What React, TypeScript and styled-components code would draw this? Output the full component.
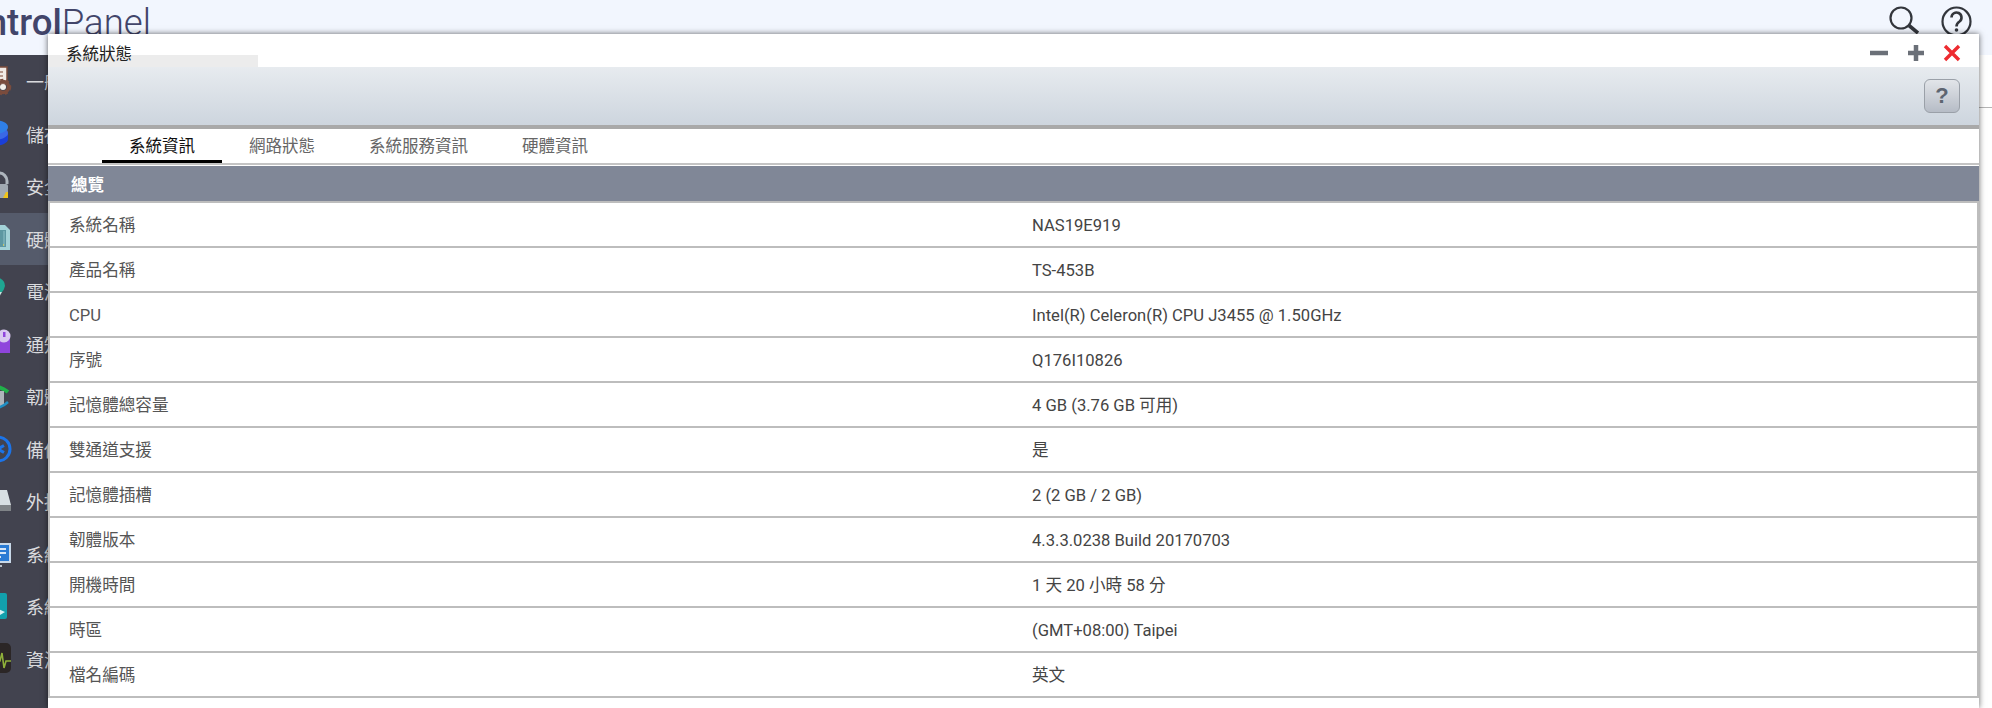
import React from 'react';
import styled, { createGlobalStyle } from 'styled-components';

const GlobalStyle = createGlobalStyle`
  html, body {
    margin: 0;
    padding: 0;
    background: #fff;
    overflow: hidden;
  }
  body {
    font-family: Roboto, "Noto Sans CJK TC", sans-serif;
  }
`;

const Page = styled.div`
  position: relative;
  width: 1992px;
  height: 708px;
  overflow: hidden;
  background: #fff;
`;

const TopBar = styled.header`
  height: 55px;
  background: #f2f6fe;
  display: flex;
  align-items: flex-start;
  justify-content: space-between;
  overflow: hidden;
`;

const Logo = styled.div`
  margin-left: -58px;
  font-size: 36.6px;
  line-height: 46px;
  color: #42456a;
  font-weight: 500;
  white-space: nowrap;
  span {
    font-weight: 300;
  }
`;

const TopIcons = styled.div`
  display: flex;
  gap: 22px;
  padding: 6px 20px 0 0;
`;

const Body = styled.div`
  display: flex;
`;

const Sidebar = styled.nav`
  width: 60px;
  height: 653px;
  background: #42434f;
  overflow: hidden;
`;

const SideItem = styled.div<{ $active?: boolean }>`
  height: 52.5px;
  display: flex;
  align-items: center;
  gap: 14px;
  background: ${(p) => (p.$active ? '#555b6b' : 'transparent')};
  color: #d9dadd;
  font-size: 18px;
  white-space: nowrap;
  svg {
    flex: none;
    margin-left: -22px;
  }
`;

const Desk = styled.div`
  flex: 1;
`;

const DeskRule = styled.div`
  margin-top: 52px;
  height: 1px;
  background: #b5b5b5;
`;

const Window = styled.section`
  position: absolute;
  left: 48px;
  top: 34px;
  width: 1931px;
  height: 674px;
  background: #fff;
  box-shadow: 0 0 6px rgba(0, 0, 0, 0.6);
  display: flex;
  flex-direction: column;
`;

const TitleBar = styled.div`
  position: relative;
  height: 33px;
  box-sizing: border-box;
  display: flex;
  align-items: center;
  justify-content: space-between;
  padding: 4px 18px 0 18px;
  font-size: 16.5px;
  color: #222;
`;

const TitlePatch = styled.div`
  position: absolute;
  left: 0;
  bottom: 0;
  width: 210px;
  height: 12px;
  background: #ececec;
`;

const TitleText = styled.span`
  position: relative;
`;

const WinControls = styled.div`
  display: flex;
  align-items: center;
  gap: 18px;
`;

const Toolbar = styled.div`
  height: 58px;
  background: linear-gradient(to bottom, #e7ebef, #cdd5de);
  border-bottom: 4px solid #a9a9a9;
  box-sizing: content-box;
  display: flex;
  align-items: center;
  justify-content: flex-end;
  padding-right: 19px;
`;

const HelpButton = styled.button`
  width: 36px;
  height: 34px;
  padding: 0;
  border: 1px solid #9aa0a8;
  border-radius: 6px;
  background: linear-gradient(to bottom, #e2e5e9, #b6bcc6);
  color: #5d6570;
  font: bold 22px "Liberation Sans", sans-serif;
`;

const Tabs = styled.div`
  height: 34px;
  display: flex;
  padding-left: 54px;
  border-bottom: 2px solid #c4c4c4;
  box-sizing: content-box;
`;

const Tab = styled.div<{ $active?: boolean }>`
  padding: 0 27px;
  height: 34px;
  box-sizing: border-box;
  display: flex;
  align-items: center;
  font-size: 16.5px;
  color: ${(p) => (p.$active ? '#111' : '#666')};
  border-bottom: 3px solid ${(p) => (p.$active ? '#000' : 'transparent')};
`;

const SectionHeader = styled.div`
  margin-top: 1px;
  height: 35px;
  background: #808797;
  color: #fff;
  font-size: 16.5px;
  font-weight: 700;
  display: flex;
  align-items: center;
  padding-left: 23px;
`;

const Table = styled.div`
  border-left: 2px solid #bdbdbd;
  border-right: 2px solid #bdbdbd;
  border-top: 2px solid #bdbdbd;
`;

const Row = styled.div`
  height: 45px;
  box-sizing: border-box;
  display: grid;
  grid-template-columns: 963px 1fr;
  align-items: center;
  padding: 3px 0 0 19px;
  border-bottom: 2px solid #bdbdbd;
  font-size: 16.6px;
  line-height: 20px;
  color: #444;
`;

const Label = styled.div`
  color: #555;
`;

const rows: [string, string][] = [
  ['系統名稱', 'NAS19E919'],
  ['產品名稱', 'TS-453B'],
  ['CPU', 'Intel(R) Celeron(R) CPU J3455 @ 1.50GHz'],
  ['序號', 'Q176I10826'],
  ['記憶體總容量', '4 GB (3.76 GB 可用)'],
  ['雙通道支援', '是'],
  ['記憶體插槽', '2 (2 GB / 2 GB)'],
  ['韌體版本', '4.3.3.0238 Build 20170703'],
  ['開機時間', '1 天 20 小時 58 分'],
  ['時區', '(GMT+08:00) Taipei'],
  ['檔名編碼', '英文'],
];

// icons are cut by the page's left edge, only their right part shows
const sideIcons: React.ReactNode[] = [
  <g key="general">
    <rect x="4" y="1" width="17" height="17" fill="#f1ebe6" stroke="#7a4c3d" strokeWidth="1.5" />
    <path d="M8 6H17M8 10H17" stroke="#b79a8e" strokeWidth="2" />
    <circle cx="17" cy="21" r="5.5" fill="none" stroke="#7a4c3d" strokeWidth="3.5" />
    <circle cx="17" cy="21" r="7" fill="none" stroke="#7a4c3d" strokeWidth="2.5" strokeDasharray="3 3" />
    <circle cx="17" cy="21" r="3" fill="#f4efe9" />
  </g>,
  <g key="storage">
    <ellipse cx="8" cy="20" rx="14" ry="7" fill="#1a3fd8" />
    <rect x="-6" y="14" width="28" height="6" fill="#1a3fd8" />
    <ellipse cx="8" cy="14" rx="14" ry="7" fill="#3a68e4" />
    <ellipse cx="8" cy="8" rx="14" ry="7" fill="#2f7fe6" />
  </g>,
  <g key="security">
    <path d="M5 13V10a8 8 0 0 1 16 0v3" fill="none" stroke="#aeb5bd" strokeWidth="3" />
    <rect x="-2" y="13" width="24" height="14" rx="2" fill="#a1a9b2" />
    <path d="M22 27H17L20 21L22 21Z" fill="#f0c419" />
  </g>,
  <g key="hardware">
    <path d="M-6 1H19L24 6V26H-6Z" fill="#a3d2d8" />
    <rect x="-2" y="6" width="22" height="17" fill="#5d97a2" />
    <path d="M3 7V22M8 7V22M13 7V22M18 7V22" stroke="#7fb4bc" strokeWidth="1.5" />
    <path d="M2 21H18" stroke="#e1cf58" strokeWidth="1.5" strokeDasharray="2 3" />
  </g>,
  <g key="power">
    <path d="M-8 1H10Q19 3 19 10Q18 14 16 16H-8Z" fill="#1fa692" />
    <path d="M-8 16H16Q13 22 7 26H-8Z" fill="#c6e4df" />
  </g>,
  <g key="notice">
    <rect x="-6" y="9" width="30" height="15" fill="#8f45dc" />
    <circle cx="18" cy="7" r="6.5" fill="#d8c8f0" />
    <rect x="17" y="3" width="2.5" height="5" fill="#8f45dc" />
  </g>,
  <g key="firmware">
    <path d="M-4 12 Q8 0 22 11" fill="none" stroke="#21b04a" strokeWidth="4" />
    <rect x="2" y="10" width="16" height="15" fill="#aeb4ba" />
    <path d="M-4 25 Q10 32 22 21" fill="none" stroke="#1f8fc4" strokeWidth="2.5" />
  </g>,
  <g key="backup">
    <circle cx="12" cy="15" r="12" fill="none" stroke="#1c74e8" strokeWidth="3" />
    <path d="M12 8V22M6 11.5L18 18.5M18 11.5L6 18.5" stroke="#1c74e8" strokeWidth="3" />
  </g>,
  <g key="external">
    <path d="M-6 4H21L25 19H-6Z" fill="#d8dfe3" />
    <rect x="-6" y="19" width="31" height="6" fill="#7f8387" />
  </g>,
  <g key="status">
    <rect x="-8" y="4" width="33" height="20" fill="#c8d8e8" />
    <rect x="-6" y="6" width="29" height="16" fill="#2a7bd4" />
    <path d="M6 10H20M6 14H20M6 18H15" stroke="#d6e6f7" strokeWidth="2" />
    <rect x="2" y="26" width="14" height="2" fill="#b8c0c8" />
  </g>,
  <g key="logs">
    <rect x="-8" y="2" width="29" height="26" rx="2" fill="#12a0ac" />
    <path d="M12 18L19 21L14 24Z" fill="#d9f2f5" />
  </g>,
  <g key="monitor">
    <rect x="-6" y="-1" width="31" height="30" rx="5" fill="#2b2626" />
    <path d="M-6 17H14L16 9L18 24L20 17H25" fill="none" stroke="#8fb03a" strokeWidth="1.6" />
  </g>,
];

const sideLabels = ['一般設定', '儲存與快照', '安全', '硬體', '電源', '通知', '韌體更新', '備份/還原', '外接裝置', '系統狀態', '系統記錄', '資源監控'];

const App: React.FC = () => (
  <>
    <GlobalStyle />
    <Page>
      <TopBar>
        <Logo>
          Control<span>Panel</span>
        </Logo>
        <TopIcons>
          <svg width="30" height="28" viewBox="0 0 30 28" fill="none" stroke="#33363c">
            <circle cx="12" cy="12" r="10.5" strokeWidth="2.2" />
            <path d="M20 19.5L29 27" strokeWidth="3.6" />
          </svg>
          <svg width="31" height="31" viewBox="0 0 31 31" fill="none" stroke="#33363c">
            <circle cx="15.5" cy="15.5" r="14" strokeWidth="2.2" />
            <path d="M10.5 11.5a5 5 0 1 1 8 4c-2 1.4-3 2.4-3 5" strokeWidth="2.6" />
            <circle cx="15.5" cy="24" r="1.8" fill="#33363c" stroke="none" />
          </svg>
        </TopIcons>
      </TopBar>
      <Body>
        <Sidebar>
          {sideLabels.map((label, i) => (
            <SideItem key={label} $active={i === 3}>
              <svg width="34" height="34" viewBox="-8 -2 34 34">
                {sideIcons[i]}
              </svg>
              {label}
            </SideItem>
          ))}
        </Sidebar>
        <Desk>
          <DeskRule />
        </Desk>
      </Body>
      <Window>
        <TitleBar>
          <TitlePatch />
          <TitleText>系統狀態</TitleText>
          <WinControls>
            <svg width="20" height="16" viewBox="0 0 20 16">
              <path d="M1 8H19" stroke="#6b7078" strokeWidth="4.5" />
            </svg>
            <svg width="18" height="18" viewBox="0 0 18 18">
              <path d="M1 9H17M9 1V17" stroke="#6b7078" strokeWidth="4.5" />
            </svg>
            <svg width="18" height="18" viewBox="0 0 18 18">
              <path d="M2 2L16 16M16 2L2 16" stroke="#ee2b30" strokeWidth="3.4" />
            </svg>
          </WinControls>
        </TitleBar>
        <Toolbar>
          <HelpButton>?</HelpButton>
        </Toolbar>
        <Tabs>
          <Tab $active>系統資訊</Tab>
          <Tab>網路狀態</Tab>
          <Tab>系統服務資訊</Tab>
          <Tab>硬體資訊</Tab>
        </Tabs>
        <SectionHeader>總覽</SectionHeader>
        <Table>
          {rows.map(([k, v]) => (
            <Row key={k}>
              <Label>{k}</Label>
              <div>{v}</div>
            </Row>
          ))}
        </Table>
      </Window>
    </Page>
  </>
);

export default App;
